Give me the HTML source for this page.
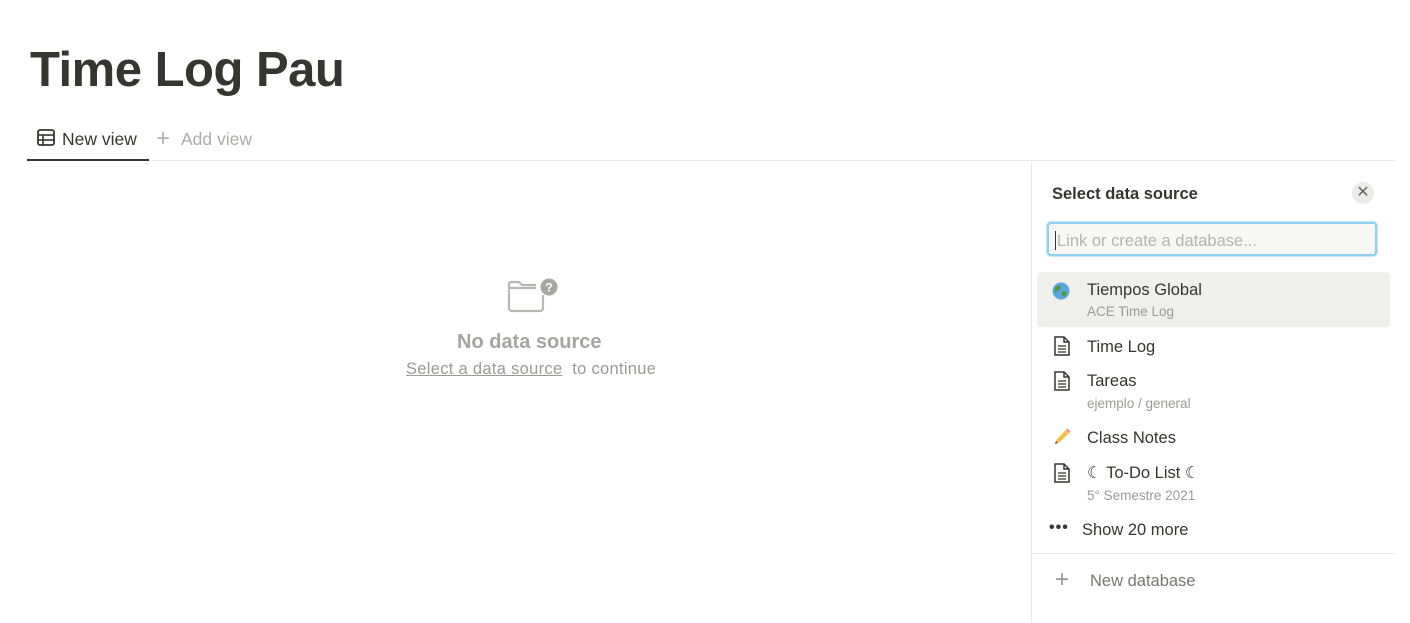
<!DOCTYPE html>
<html><head><meta charset="utf-8"><style>
*{margin:0;padding:0;box-sizing:border-box}
body{width:1410px;height:623px;background:#fff;font-family:"Liberation Sans",sans-serif;color:#37352f;position:relative;overflow:hidden}
.a{position:absolute;white-space:nowrap}
.t{font-size:16.5px;color:#37352f}
.s{font-size:13.5px;color:#9b9a97}
</style></head><body>
<div class="a" style="left:30px;top:42px;font-size:49px;font-weight:bold;color:#37352f;letter-spacing:-0.5px">Time Log Pau</div>
<svg class="a" style="left:37px;top:129px" width="18" height="18" viewBox="0 0 18 18"><rect x="1" y="1" width="16" height="15" rx="2" fill="none" stroke="#37352f" stroke-width="1.8"/><line x1="1" y1="6" x2="17" y2="6" stroke="#37352f" stroke-width="1.6"/><line x1="1" y1="11" x2="17" y2="11" stroke="#37352f" stroke-width="1.6"/><line x1="6" y1="6" x2="6" y2="16" stroke="#37352f" stroke-width="1.6"/></svg>
<div class="a" style="left:62px;top:129px;font-size:17.5px;font-weight:500;color:#37352f">New view</div>
<div class="a" style="left:156px;top:125px;font-size:24px;color:#b4b4b0;font-weight:300">+</div>
<div class="a" style="left:181px;top:129px;font-size:17.5px;color:#acaba9">Add view</div>
<div class="a" style="left:27px;top:160px;width:1368px;height:1px;background:#e9e9e7"></div>
<div class="a" style="left:27px;top:159px;width:122px;height:2px;background:#37352f"></div>

<svg class="a" style="left:506px;top:278px" width="54" height="36" viewBox="0 0 54 36"><path d="M3 10 V6 a2 2 0 0 1 2-2 h8 l3 3 h14 M3 10 h27 M3 10 v20 a3 3 0 0 0 3 3 h28 a3 3 0 0 0 3-3 V17" fill="none" stroke="#b8b7b4" stroke-width="2.2"/><circle cx="43" cy="9" r="8.5" fill="#a8a7a4"/><text x="43" y="13.5" text-anchor="middle" font-size="12" font-weight="bold" fill="#fff" font-family="Liberation Sans">?</text></svg>
<div class="a" style="left:457px;top:331px;font-size:20px;font-weight:bold;color:#a5a4a1">No data source</div>
<div class="a" style="left:406px;top:360px;font-size:16.5px;color:#9b9a97;letter-spacing:0.3px"><span style="text-decoration:underline">Select a data source</span>&nbsp; to continue</div>

<div class="a" style="left:1031px;top:162px;width:1px;height:461px;background:#e9e9e7"></div>
<div class="a" style="left:1052px;top:185px;font-size:16.5px;font-weight:bold;color:#37352f">Select data source</div>
<div class="a" style="left:1352px;top:182px;width:22px;height:22px;border-radius:50%;background:#ebebea;color:#6b6a67;font-size:16px;text-align:center;line-height:22px">✕</div>
<div class="a" style="left:1047px;top:222px;width:330px;height:34px;border:2px solid #8fd1ee;border-radius:4px;background:#f7f7f5;box-shadow:0 0 0 1px #c6e8f6"></div>
<div class="a" style="left:1055px;top:231px;width:1px;height:19px;background:#37352f"></div>
<div class="a" style="left:1057px;top:232px;font-size:16.5px;color:#b4b3b0">Link or create a database...</div>

<div class="a" style="left:1037px;top:272px;width:353px;height:55px;background:#efefee;border-radius:4px"></div>
<svg class="a" style="left:1052px;top:282px" width="18" height="18" viewBox="0 0 18 18"><circle cx="9" cy="9" r="8.5" fill="#5aa7e0"/><path d="M3 6 q3-4 6-2 l-1 4 -3 1 -2 3z M10 10 l4-1 1 3 -3 3 -2-2z" fill="#4f9a3a"/></svg>
<div class="a t" style="left:1087px;top:281px">Tiempos Global</div>
<div class="a s" style="left:1087px;top:304px">ACE Time Log</div>

<svg width="0" height="0" style="position:absolute"><defs><symbol id="doc" viewBox="0 0 18 20"><path d="M2 1 h9 l5 5 v13 h-14z M11 1 v5 h5" fill="none" stroke="#37352f" stroke-width="1.5"/><path d="M5 10 h8 M5 13 h8 M5 16 h8" stroke="#37352f" stroke-width="1.3"/></symbol></defs></svg>
<svg class="a" style="left:1053px;top:336px" width="18" height="20"><use href="#doc"/></svg>
<div class="a t" style="left:1087px;top:338px">Time Log</div>
<svg class="a" style="left:1053px;top:371px" width="18" height="20"><use href="#doc"/></svg>
<div class="a t" style="left:1087px;top:372px">Tareas</div>
<div class="a s" style="left:1087px;top:396px">ejemplo / general</div>
<svg class="a" style="left:1052px;top:427px" width="20" height="20" viewBox="0 0 20 20"><path d="M3 17 l2-5 9-9 3 3 -9 9z" fill="#f5c04a"/><path d="M14 3 l3 3 1.5-1.5 -3-3z" fill="#e88a8a"/><path d="M3 17 l1-3 2 2z" fill="#555"/></svg>
<div class="a t" style="left:1087px;top:429px">Class Notes</div>
<svg class="a" style="left:1053px;top:463px" width="18" height="20"><use href="#doc"/></svg>
<div class="a t" style="left:1087px;top:463px">☾ To-Do List ☾</div>
<div class="a s" style="left:1087px;top:488px">5° Semestre 2021</div>
<div class="a" style="left:1049px;top:519px;font-size:16px;color:#37352f;letter-spacing:1px;font-weight:bold">•••</div>
<div class="a t" style="left:1082px;top:521px">Show 20 more</div>
<div class="a" style="left:1032px;top:553px;width:363px;height:1px;background:#e9e9e7"></div>
<div class="a" style="left:1055px;top:566px;font-size:24px;color:#9b9a97;font-weight:300">+</div>
<div class="a" style="left:1090px;top:572px;font-size:16.5px;color:#787774">New database</div>
</body></html>
